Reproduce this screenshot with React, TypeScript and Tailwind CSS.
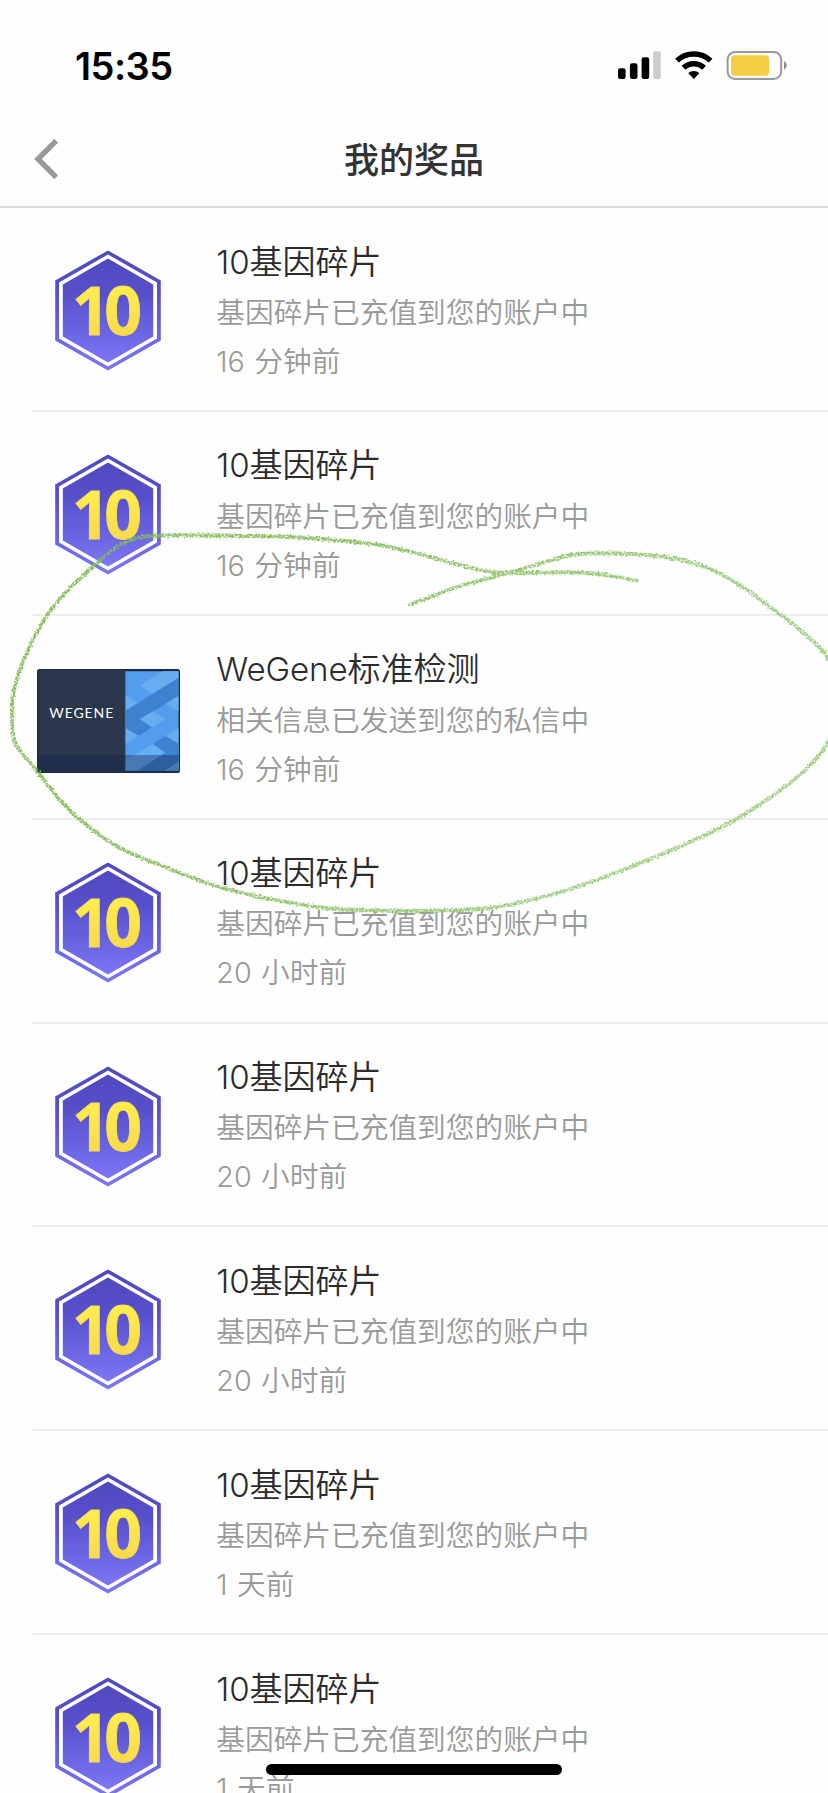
type Prize = {
  kind: "shard" | "kit";
  title: string;
  note: string;
  time: string;
};

const shard = (time: string): Prize => ({
  kind: "shard",
  title: "10基因碎片",
  note: "基因碎片已充值到您的账户中",
  time,
});

const prizes: Prize[] = [
  shard("16 分钟前"),
  shard("16 分钟前"),
  {
    kind: "kit",
    title: "WeGene标准检测",
    note: "相关信息已发送到您的私信中",
    time: "16 分钟前",
  },
  shard("20 小时前"),
  shard("20 小时前"),
  shard("20 小时前"),
  shard("1 天前"),
  shard("1 天前"),
];

const StatusIcons = () => (
  <svg width="170" height="32" viewBox="0 0 170 32">
    <rect x="0" y="17.3" width="7.6" height="10.7" rx="2.2" />
    <rect x="11.9" y="12.3" width="7.6" height="15.7" rx="2.2" />
    <rect x="23.6" y="6.3" width="7.6" height="21.7" rx="2.2" />
    <rect x="35.2" y="0.3" width="7.6" height="27.7" rx="2.2" fill="#cccccc" />
    <g fill="none" stroke="#000" strokeWidth="5.4">
      <path d="M59 9.6a24.5 24.5 0 0 1 33.6 0" />
      <path d="M65.5 16.8a15 15 0 0 1 20.6 0" />
    </g>
    <path d="M75.8 28l-5.6-5.9a8.2 8.2 0 0 1 11.2 0z" />
    <rect x="109.6" y="1" width="53.6" height="27" rx="7.5" fill="none" stroke="#999" strokeWidth="2" />
    <rect x="113" y="4.3" width="38" height="20.4" rx="3.5" fill="#f5cd46" />
    <path d="M166 10.3c3.7 1.7 3.7 6.7 0 8.4z" fill="#8c8c8c" />
  </svg>
);

const ShardBadge = () => (
  <svg width="106" height="121" viewBox="0 0 106 121">
    <defs>
      <linearGradient id="shard" x1="0" y1="0" x2="0" y2="1">
        <stop offset="0" stopColor="#4f49bf" />
        <stop offset="0.35" stopColor="#5850cb" />
        <stop offset="1" stopColor="#7c76f6" />
      </linearGradient>
      <linearGradient id="gold" x1="0" y1="0" x2="0" y2="1">
        <stop offset="0.2" stopColor="#fff04e" />
        <stop offset="0.8" stopColor="#f9da4c" />
      </linearGradient>
    </defs>
    <path d="M53 0.4L105.8 30.5V90.5L53 120.6L0.2 90.5V30.5z" fill="url(#shard)" />
    <path d="M53 4.6L102 32.5V88.5L53 116.4L4 88.5V32.5z" fill="#fff" />
    <path d="M53 8.5L98.2 34.6V86.4L53 112.5L7.8 86.4V34.6z" fill="url(#shard)" />
    <text
      x="17"
      y="84.5"
      fontSize="66"
      fill="url(#gold)"
      stroke="#f5dc52"
      strokeWidth="0.8"
      className="font-['Open_Sans',sans-serif] font-bold tracking-[-5.5px]"
    >
      10
    </text>
  </svg>
);

const KitBox = () => (
  <svg width="143" height="104" viewBox="0 0 143 104">
    <defs>
      <clipPath id="panel">
        <rect x="88.5" y="2.3" width="53" height="99.4" />
      </clipPath>
    </defs>
    <rect width="143" height="104" rx="2.5" fill="#1d2b47" />
    <rect x="1.3" y="1.3" width="87" height="101.4" rx="1.5" fill="#2b374d" />
    <g clipPath="url(#panel)">
      <rect x="88" y="2" width="54" height="100" fill="#539eec" />
      <path d="M102.8 16.7L126 2H142V9L116 25z" fill="#67adf1" />
      <path d="M88 26.5L101.5 34L88 42z" fill="#67adf1" />
      <path d="M88 42L142 8.5V26.5L88 60z" fill="#3d81d1" />
      <path d="M128.5 34.7L142 26.5V42.5z" fill="#67adf1" />
      <path d="M88 59.3L102.8 50L115 58.3L101.8 66.7z" fill="#3d81d1" />
      <path d="M102.8 50L116 42.3L128.5 50L115 58.3z" fill="#67adf1" />
      <path d="M88 59L101.8 66.7L88 75z" fill="#67adf1" />
      <path d="M128.5 67L142 59V75z" fill="#67adf1" />
      <path d="M128.5 67L142 75V92L127.8 83.3L115.5 75z" fill="#3d81d1" />
      <path d="M88 91.5L115.5 75L127.8 83.3L100 102H88z" fill="#67adf1" />
      <path d="M100 102L142 75V102z" fill="#3d81d1" />
      <path d="M127 102L142 92.5V102z" fill="#67adf1" />
    </g>
    <path d="M88.4 2V102" stroke="#6f7885" strokeWidth="0.7" />
    <rect x="1.3" y="86" width="140" height="16" fill="#10234d" fillOpacity="0.37" />
    <text
      x="12.3"
      y="49.2"
      fontSize="14"
      textLength="64"
      fill="#fff"
      className="font-[Lato,sans-serif]"
    >
      WEGENE
    </text>
  </svg>
);

const PrizeRow = ({ prize }: { prize: Prize }) => (
  <li className="ml-[33px] flex h-[203.9px] shrink-0 border-b-2 border-[#ededeb]">
    <div className="flex w-[183.3px] shrink-0 items-start">
      {prize.kind === "shard" ? (
        <div className="ml-[22px] mt-[42px]">
          <ShardBadge />
        </div>
      ) : (
        <div className="ml-[3.5px] mt-[53px]">
          <KitBox />
        </div>
      )}
    </div>
    <div className="flex flex-col whitespace-nowrap pt-[28.6px] font-[350] text-[#999]">
      <h2 className="text-[33.1px] leading-[50px] tracking-[-0.1px] text-[#2b2b2b]">{prize.title}</h2>
      <p className="mt-[1.2px] text-[28.7px] leading-[50px]">{prize.note}</p>
      <p className="text-[28.7px] leading-[47px] [word-spacing:1.4px]">{prize.time}</p>
    </div>
  </li>
);

// Crayon loop drawn over the kit row
const loop: number[][] = [
  [637, 581], [618, 577], [590, 573], [560, 572.5], [497, 572.5], [470, 567.5], [440, 559.5], [414, 552.5],
  [380, 545], [340, 540.5], [290, 537], [220, 535.5], [160, 535.5], [137, 538], [118, 546], [97, 563],
  [70, 588], [48, 614], [33, 640], [19, 672], [12.5, 700], [13, 733], [18, 748], [37, 771], [60, 800],
  [85, 824], [120, 848], [160, 865], [213, 885], [270, 899], [330, 908.5], [380, 910.5], [440, 910.5],
  [490, 908], [530, 900], [570, 889], [620, 871], [690, 842], [740, 817], [790, 783], [815, 760],
  [830, 738], [840, 705], [830, 661], [800, 630], [770, 607], [735, 582], [700, 565], [665, 557],
  [620, 553.5], [575, 554.5], [545, 562], [510, 572.5], [460, 586], [430, 597], [410, 605],
];

const smooth = (pts: number[][]) =>
  pts.slice(1).reduce((d, p, i) => {
    const a = pts[i];
    const before = pts[i - 1] ?? a;
    const after = pts[i + 2] ?? p;
    const c1 = [a[0] + (p[0] - before[0]) / 6, a[1] + (p[1] - before[1]) / 6];
    const c2 = [p[0] - (after[0] - a[0]) / 6, p[1] - (after[1] - a[1]) / 6];
    return `${d}C${c1} ${c2} ${p}`;
  }, `M${pts[0]}`);

const CrayonLoop = () => (
  <svg
    width="828"
    height="420"
    viewBox="0 510 828 420"
    className="pointer-events-none absolute left-0 top-[510px]"
  >
    <defs>
      <filter
        id="crayon"
        filterUnits="userSpaceOnUse"
        x="0"
        y="510"
        width="828"
        height="420"
        colorInterpolationFilters="sRGB"
      >
        <feTurbulence type="fractalNoise" baseFrequency="0.5" numOctaves="2" seed="4" result="noise" />
        <feDisplacementMap
          in="SourceGraphic"
          in2="noise"
          scale="4"
          xChannelSelector="R"
          yChannelSelector="G"
          result="rough"
        />
        <feColorMatrix
          in="noise"
          type="matrix"
          values="0 0 0 0 0  0 0 0 0 0  0 0 0 0 0  0 0 0 2.5 -0.5"
          result="grain"
        />
        <feComposite in="rough" in2="grain" operator="in" />
      </filter>
      <linearGradient id="fade" gradientUnits="userSpaceOnUse" x1="0" y1="560" x2="560" y2="910">
        <stop offset="0" stopColor="#82b856" />
        <stop offset="0.5" stopColor="#88bd5e" />
        <stop offset="1" stopColor="#9ccb7c" />
      </linearGradient>
    </defs>
    <path d={smooth(loop)} fill="none" stroke="url(#fade)" strokeWidth="3.8" strokeLinecap="round" filter="url(#crayon)" />
  </svg>
);

const App = () => {
  return (
    <div className="relative flex h-[1793px] w-[828px] flex-col overflow-hidden bg-[#fefefe] font-[Inter,'Noto_Sans_CJK_SC',sans-serif]">
      <div className="flex h-[116px] shrink-0 items-start justify-between pl-[75px] pr-[40px] pt-[51px]">
        <span className="-mt-[9.5px] text-[38px] leading-[48px] font-semibold tracking-[-0.5px] text-black">
          15:35
        </span>
        <StatusIcons />
      </div>
      <header className="grid h-[92px] shrink-0 grid-cols-[1fr_auto_1fr] items-center border-b-2 border-[#dcdcdc]">
        <svg width="24" height="40" viewBox="0 0 24 40" className="mb-[4px] ml-[34px]">
          <path d="M22.2 1.8L4 20L22.2 38.2" fill="none" stroke="#999" strokeWidth="5.4" />
        </svg>
        <h1 className="mb-[3px] text-[35px] leading-[50px] font-medium text-[#333]">我的奖品</h1>
        <span />
      </header>
      <ul className="flex flex-col">
        {prizes.map((prize, i) => (
          <PrizeRow key={i} prize={prize} />
        ))}
      </ul>
      <CrayonLoop />
      <div className="absolute bottom-[18px] left-[266px] h-[11px] w-[296px] rounded-full bg-black" />
    </div>
  );
};

export default App;
